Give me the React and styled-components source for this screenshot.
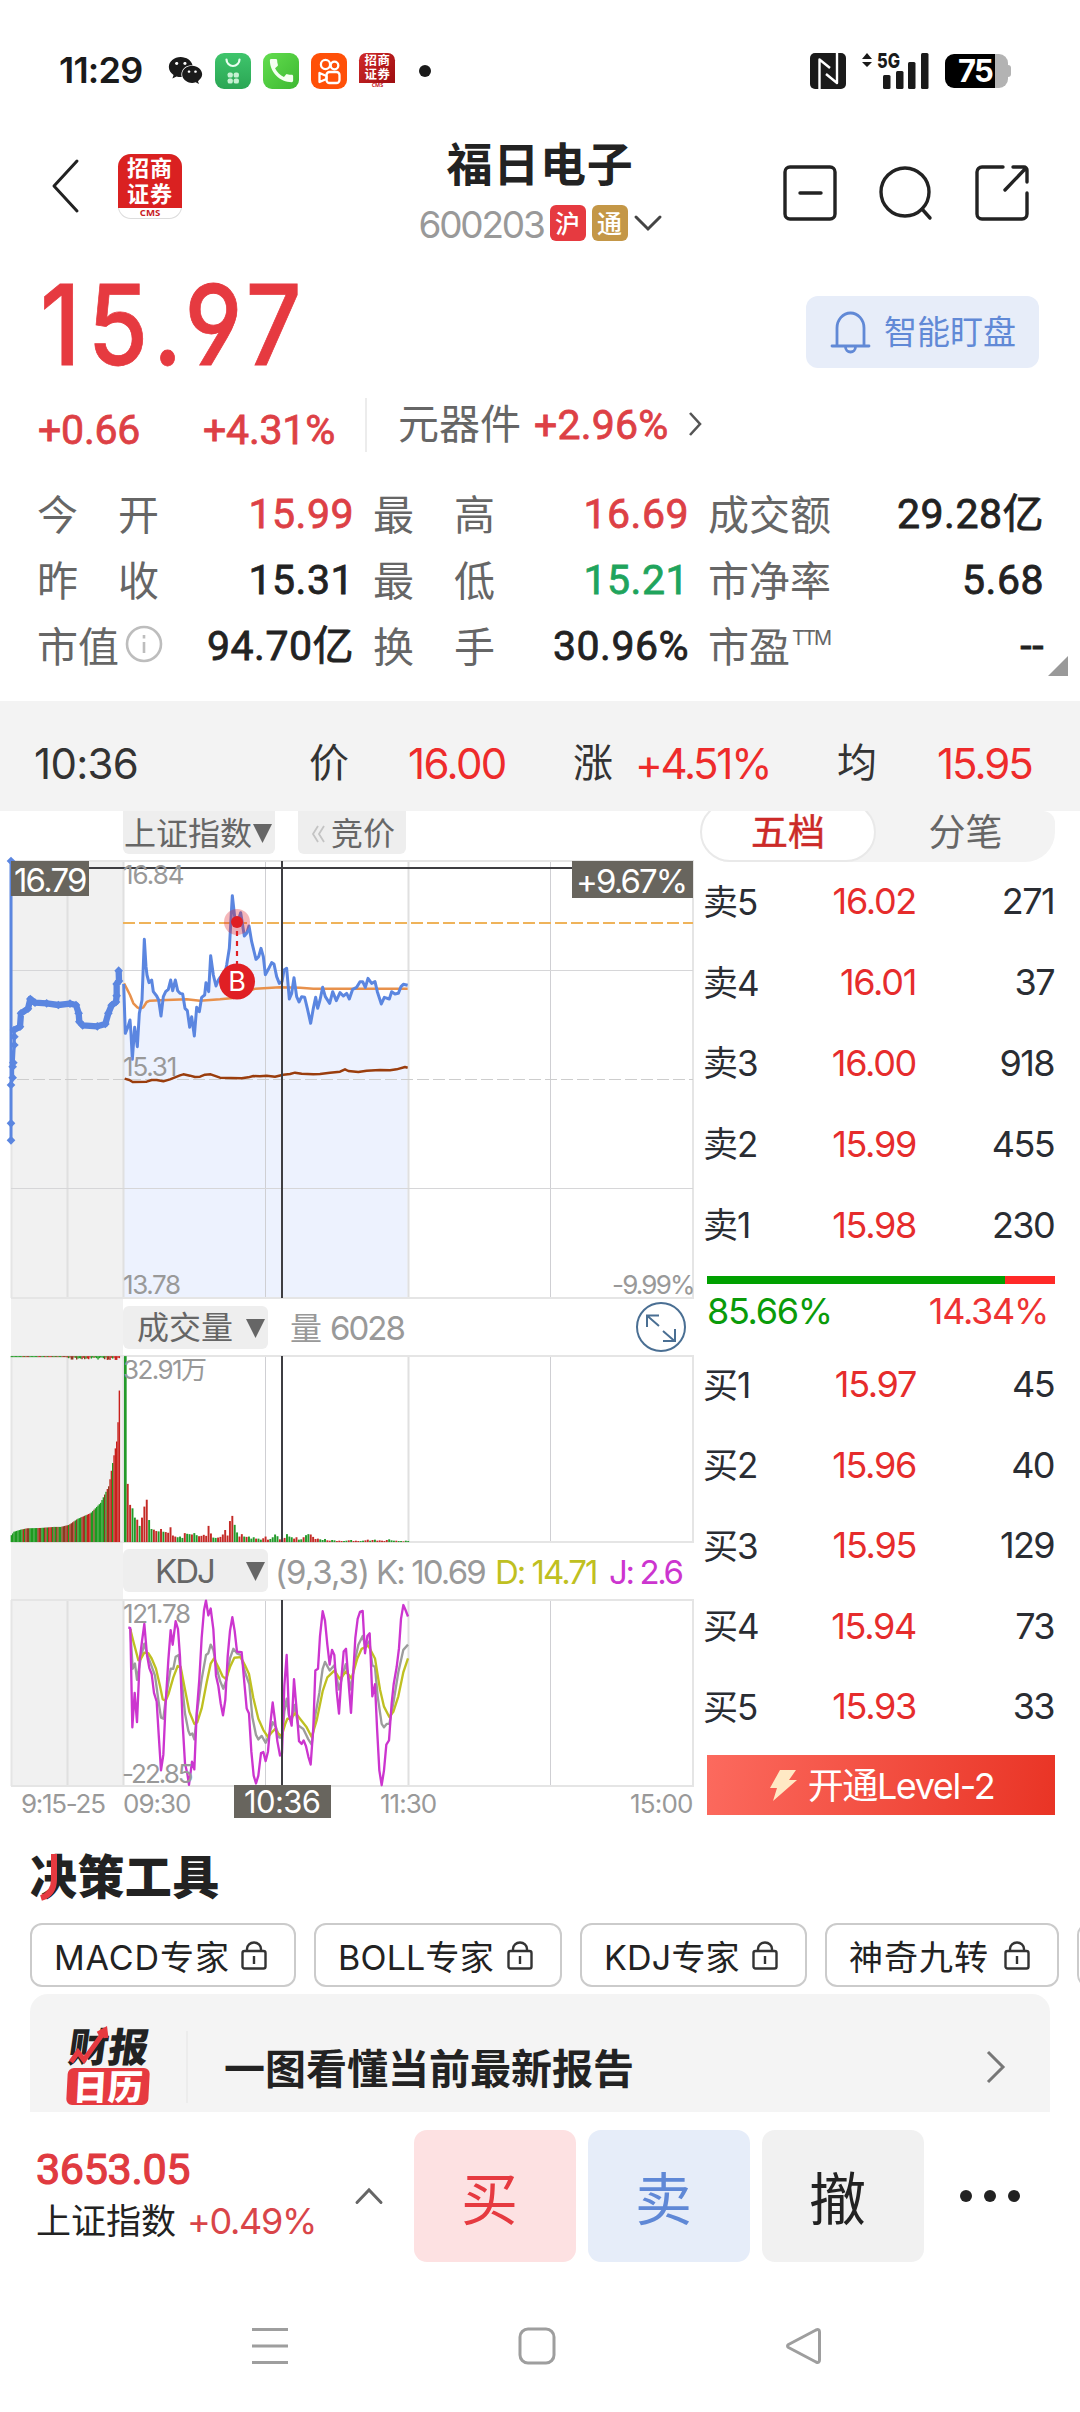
import React from "react";
import styled, { createGlobalStyle } from "styled-components";
import { FaWeixin } from "react-icons/fa";
import { MdCall } from "react-icons/md";

const CJK = `"Noto Sans CJK SC", sans-serif`;
const RED = "#e63a40";
const INK = "#222222";
const MUTED = "#999999";

const GlobalStyle = createGlobalStyle`
  * { box-sizing: border-box; }
  body { margin: 0; background: #fff; font-family: Inter, ${CJK}; color: ${INK}; }
  svg { display: block; overflow: visible; }
  svg text { font-family: Inter, ${CJK}; }
`;

const Page = styled.div`
  width: 1080px;
  height: 2412px;
  overflow: hidden;
  background: #fff;
  display: flex;
  flex-direction: column;
`;

const Text = styled.span`
  display: block;
  white-space: nowrap;
  font-family: ${(p) => (p.$din ? "Roboto" : "Inter")}, ${CJK};
  font-size: ${(p) => p.$size}px;
  line-height: ${(p) => p.$lh || Math.round(p.$size * 1.25)}px;
  font-weight: ${(p) => p.$weight || 400};
  -webkit-text-stroke: ${(p) => p.$bolder || 0}px currentColor;
  color: ${(p) => p.$color || INK};
  letter-spacing: ${(p) => p.$ls || 0}px;
`;

/* ---------- status bar ---------- */

const StatusBar = styled.div`
  height: 142px;
  padding: 0 69px 1px 59px;
  display: flex;
  align-items: center;
  justify-content: space-between;
`;

const StatusGroup = styled.div`
  display: flex;
  align-items: center;
`;

const AppIcon = styled.div`
  width: 36px;
  height: 36px;
  margin-right: 12px;
  border-radius: 9px;
  background: ${(p) => p.$bg};
  display: flex;
  align-items: center;
  justify-content: center;
`;

const WechatIcon = styled(FaWeixin)`
  width: 35px;
  height: 31px;
  margin: 0 12px 0 26px;
  color: #1a1a1a;
`;

const CallIcon = styled(MdCall)`
  width: 31px;
  height: 31px;
  color: #f4fff0;
`;

const StatusDot = styled.div`
  width: 12px;
  height: 12px;
  margin-left: 24px;
  border-radius: 50%;
  background: #1a1a1a;
`;

const Battery = styled.div`
  width: 63px;
  height: 34px;
  margin-left: 16px;
  border-radius: 9px;
  background: linear-gradient(90deg, #000 0 50px, #b3b3b3 50px);
  display: flex;
  align-items: center;
  padding-left: 13px;
`;

const BatteryTip = styled.div`
  width: 3px;
  height: 12px;
  border-radius: 0 3px 3px 0;
  background: #b3b3b3;
`;

const BrandBox = styled.div`
  width: ${(p) => p.$s}px;
  height: ${(p) => p.$s + (p.$s > 40 ? 1 : 0)}px;
  border-radius: ${(p) => p.$s * 0.2}px;
  background: #fff;
  box-shadow: ${(p) => (p.$s > 40 ? "inset 0 0 0 1px #dcdcdc" : "none")};
  display: flex;
  flex-direction: column;
`;

const BrandTop = styled.div`
  height: 84%;
  padding-top: ${(p) => p.$s * 0.015}px;
  border-radius: ${(p) => `${p.$s * 0.2}px ${p.$s * 0.2}px 0 0`};
  background: ${(p) => p.$bg};
  display: flex;
  flex-direction: column;
  align-items: center;
`;

const BrandLine = styled.span`
  font: 700 ${(p) => p.$s * 0.345}px / ${(p) => p.$s * 0.4}px ${CJK};
  letter-spacing: ${(p) => p.$s * 0.015}px;
  color: #fff;
`;

const BrandName = styled.div`
  text-align: center;
  font: 700 ${(p) => p.$s * 0.15}px / ${(p) => p.$s * 0.16}px "Open Sans", sans-serif;
  color: #c8201f;
`;

function Brand({ s, bg }) {
  return (
    <BrandBox $s={s}>
      <BrandTop $s={s} $bg={bg}>
        <BrandLine $s={s}>招商</BrandLine>
        <BrandLine $s={s}>证券</BrandLine>
      </BrandTop>
      <BrandName $s={s}>CMS</BrandName>
    </BrandBox>
  );
}

function Status() {
  return (
    <StatusBar>
      <StatusGroup>
        <Text $size={36} $weight={600} $ls={-0.8} $color="#1a1a1a">11:29</Text>
        <WechatIcon />
        <AppIcon $bg="linear-gradient(#3fc56c,#2aa654)">
          <svg width="36" height="36" viewBox="0 0 36 36">
            <path d="M11.5 6.500a6.500 6.500 0 0 0 13 0" fill="none" stroke="#eafff1" strokeWidth="2.200" strokeLinecap="round" />
            {[[15.2, 22], [21.3, 22], [15.2, 28], [21.3, 28]].map(([x, y]) => (
              <rect key={x + "-" + y} x={x - 2.6} y={y - 2.6} width="5.200" height="5.200" rx="1.900" fill="#c6f1d3" />
            ))}
          </svg>
        </AppIcon>
        <AppIcon $bg="linear-gradient(135deg,#63dd4e,#3db832)">
          <CallIcon />
        </AppIcon>
        <AppIcon $bg="#ff5008">
          <svg width="36" height="36" viewBox="0 0 36 36" fill="none" stroke="#fff" strokeWidth="2.300">
            <circle cx="14.500" cy="11.500" r="4.600" />
            <circle cx="23.500" cy="12.500" r="3.800" />
            <rect x="15.500" y="19" width="13" height="11" rx="3" />
            <path d="M15.500 23l-7-3v9l7-3z" strokeLinejoin="round" />
          </svg>
        </AppIcon>
        <Brand s={36} bg="linear-gradient(135deg,#d12a2a,#9d0d10)" />
        <StatusDot />
      </StatusGroup>
      <StatusGroup>
        <svg width="36" height="36" viewBox="0 0 36 36">
          <rect width="36" height="36" rx="5" fill="#1a1a1a" />
          <path d="M9.500 36V6.500L20 15M27 0V30L16 21" fill="none" stroke="#fff" strokeWidth="2.400" strokeLinejoin="round" />
        </svg>
        <svg width="83" height="38" viewBox="0 0 83 38">
          <path d="M16 7l5-6 5 6zM16 10l5 5 5-5z" fill="#1a1a1a" />
          <text x="31" y="15.500" fontSize="20.500" fontWeight="800" textLength="23" lengthAdjust="spacingAndGlyphs" fill="#1a1a1a">5G</text>
          <rect x="37" y="23" width="7.500" height="14" rx="1.500" fill="#1a1a1a" />
          <rect x="50" y="19" width="7.500" height="18" rx="1.500" fill="#1a1a1a" />
          <rect x="62" y="10" width="7.500" height="27" rx="1.500" fill="#1a1a1a" />
          <rect x="75" y="1" width="7.500" height="36" rx="1.500" fill="#1a1a1a" />
        </svg>
        <Battery>
          <Text $size={31} $weight={700} $ls={-1.7} $lh={34} $color="#fff">75</Text>
        </Battery>
        <BatteryTip />
      </StatusGroup>
    </StatusBar>
  );
}

/* ---------- header ---------- */

const Header = styled.header`
  height: 110px;
  padding: 0 51px;
  display: grid;
  grid-template-columns: 1fr auto 1fr;
`;

const HeaderLeft = styled.div`
  height: 88px;
  display: flex;
  align-items: center;
  gap: 39px;
`;

const HeaderRight = styled.div`
  height: 102px;
  display: flex;
  align-items: center;
  justify-content: flex-end;
  gap: 42px;
`;

const HeaderTitle = styled.div`
  display: flex;
  flex-direction: column;
  align-items: center;
`;

const CodeRow = styled.div`
  height: 36px;
  margin-top: 18px;
  display: flex;
  align-items: center;
`;

const Code = styled(Text)`
  margin-top: 3px;
`;

const Tag = styled.span`
  width: 36px;
  height: 36px;
  margin-left: 6px;
  border-radius: 6px;
  background: ${(p) => p.$bg};
  font: 500 25px / 35px ${CJK};
  color: #fff;
  text-align: center;
`;

function TopHeader() {
  return (
    <Header>
      <HeaderLeft>
        <svg width="28" height="56" viewBox="0 0 28 56" fill="none" stroke={INK} strokeWidth="3" strokeLinecap="round" strokeLinejoin="round">
          <path d="M26 3L3 28l23 25" />
        </svg>
        <Brand s={64} bg="#da2121" />
      </HeaderLeft>
      <HeaderTitle>
        <Text $size={46} $weight={700} $lh={45} $ls={0.7}>福日电子</Text>
        <CodeRow>
          <Code $size={37} $color={MUTED} $ls={-2.2}>600203</Code>
          <Tag $bg={RED}>沪</Tag>
          <Tag $bg="#c49747">通</Tag>
          <svg width="34" height="20" viewBox="0 0 34 20" fill="none" stroke="#444" strokeWidth="3" strokeLinecap="round">
            <path d="M8 4l12 12L32 4" />
          </svg>
        </CodeRow>
      </HeaderTitle>
      <HeaderRight>
        <svg width="54" height="56" viewBox="0 0 54 56" fill="none" stroke={INK} strokeWidth="3.400" strokeLinecap="round">
          <rect x="2" y="2" width="50" height="52" rx="5" />
          <path d="M17 28h21" />
        </svg>
        <svg width="54" height="56" viewBox="0 0 54 56" fill="none" stroke={INK} strokeWidth="3.400" strokeLinecap="round">
          <circle cx="26" cy="27" r="24" />
          <path d="M43 44l8 9" />
        </svg>
        <svg width="54" height="56" viewBox="0 0 54 56" fill="none" stroke={INK} strokeWidth="3.400" strokeLinecap="round" strokeLinejoin="round">
          <path d="M28 2H7a5 5 0 0 0-5 5v42a5 5 0 0 0 5 5h40a5 5 0 0 0 5-5V28M38 2h11a3 3 0 0 1 3 3v12M50 4L30 25" />
        </svg>
      </HeaderRight>
    </Header>
  );
}

/* ---------- quote ---------- */

const PriceRow = styled.div`
  height: 142px;
  padding: 0 41px 0 40px;
  display: flex;
  justify-content: space-between;
`;

const BigPrice = styled.div`
  transform: scaleX(0.88);
  transform-origin: 0 50%;
  font: 500 111px / 145px Inter, sans-serif;
  font-feature-settings: "cv03", "cv04";
  -webkit-text-stroke: 0.8px currentColor;
  letter-spacing: 8.1px;
  color: ${RED};
`;

const WatchButton = styled.button`
  width: 233px;
  height: 72px;
  margin-top: 44px;
  padding: 0 0 0 24px;
  border: 0;
  border-radius: 12px;
  background: #e7edf9;
  display: flex;
  align-items: center;
  gap: 13px;
`;

const ChangeRow = styled.div`
  height: 54px;
  padding-left: 38px;
  display: grid;
  grid-template-columns: 165px 162px 33px 136px 154px 20px;
  align-items: center;
`;

const ChangeValue = styled(Text)`
  margin-top: ${(p) => p.$drop}px;
`;

const Rule = styled.div`
  width: 2px;
  height: ${(p) => p.$h || 54}px;
  background: #ececec;
`;

const Stats = styled.div`
  position: relative;
  height: 253px;
  padding: 33px 35px 0 37px;
  display: grid;
  grid-template-columns: 317px 316px 336px;
  grid-auto-rows: 66px;
  column-gap: 19px;
`;

const Stat = styled.div`
  display: flex;
  align-items: center;
  justify-content: space-between;
`;

const StatLabel = styled.div`
  width: ${(p) => p.$w}px;
  margin-top: -4px;
  display: flex;
  align-items: center;
  justify-content: space-between;
  white-space: nowrap;
  font: 400 41px / 48px ${CJK};
  color: #666;
`;

const Sup = styled.span`
  align-self: flex-start;
  margin-top: 8px;
  font: 400 20px / 20px Inter, sans-serif;
  letter-spacing: -2px;
`;

const Corner = styled.div`
  position: absolute;
  right: 12px;
  bottom: 25px;
  width: 20px;
  height: 20px;
  background: #999;
  clip-path: polygon(100% 0, 100% 100%, 0 100%);
`;

const STATS = [
  ["今 开", "15.99", "#dd4045"], ["最 高", "16.69", "#dd4045"], ["成交额", "29.28亿"],
  ["昨 收", "15.31"], ["最 低", "15.21", "#1fa45c"], ["市净率", "5.68"],
  ["市值 i", "94.70亿"], ["换 手", "30.96%"], ["市盈 TTM", "--"],
];

function LabelPart({ part }) {
  if (part === "i")
    return (
      <svg width="38" height="38" viewBox="0 0 38 38" fill="none" stroke="#bdbdbd" strokeWidth="2.600">
        <circle cx="19" cy="19" r="17" />
        <path d="M19 17v11M19 10v3.500" />
      </svg>
    );
  if (part === "TTM") return <Sup>TTM</Sup>;
  return <span>{part}</span>;
}

function Quote() {
  const change = { $din: true, $size: 41, $bolder: 0.8, $color: "#dd4045" };
  return (
    <section>
      <PriceRow>
        <BigPrice>15.97</BigPrice>
        <WatchButton>
          <svg width="41" height="42" viewBox="0 0 41 42" fill="none" stroke="#6189d6" strokeWidth="2.800" strokeLinecap="round">
            <path d="M2 35h37M7 35V17a13.500 15 0 0 1 27 0v18M15.500 36a5 5 0 0 0 10 0" />
          </svg>
          <Text $size={33} $color="#6189d6">智能盯盘</Text>
        </WatchButton>
      </PriceRow>
      <ChangeRow>
        <ChangeValue {...change} $drop={11} $ls={-0.2}>+0.66</ChangeValue>
        <ChangeValue {...change} $drop={11} $ls={-0.2}>+4.31%</ChangeValue>
        <Rule />
        <ChangeValue $drop={-1} $size={41} $color="#666">元器件</ChangeValue>
        <ChangeValue {...change} $drop={1} $ls={0.2}>+2.96%</ChangeValue>
        <svg width="14" height="26" viewBox="0 0 14 26" fill="none" stroke="#555" strokeWidth="2.600">
          <path d="M2 1l10 11L2 23" />
        </svg>
      </ChangeRow>
      <Stats>
        {STATS.map(([label, value, color]) => (
          <Stat key={label}>
            <StatLabel $w={label.endsWith("i") ? 126 : 122}>
              {label.split(" ").map((part) => (
                <LabelPart key={part} part={part} />
              ))}
            </StatLabel>
            <Text $din $size={41} $bolder={0.8} $ls={0.5} $color={color}>{value}</Text>
          </Stat>
        ))}
        <Corner />
      </Stats>
    </section>
  );
}

const CursorBar = styled.div`
  height: 110px;
  padding: 14px 0 0 34px;
  background: #f3f3f3;
  display: grid;
  grid-template-columns: 275px 99px 165px 62px 202px 100px 1fr;
  align-items: center;
`;

function CursorInfo() {
  const up = "#ee2b2b";
  return (
    <CursorBar>
      <Text $size={42} $ls={-0.7} $color="#333">10:36</Text>
      <Text $size={40} $color="#333">价</Text>
      <Text $size={42} $ls={-1.6} $color={up}>16.00</Text>
      <Text $size={40} $color="#333">涨</Text>
      <Text $size={42} $ls={-2.3} $color={up}>+4.51%</Text>
      <Text $size={40} $color="#333">均</Text>
      <Text $size={42} $ls={-2} $color={up}>15.95</Text>
    </CursorBar>
  );
}

/* ---------- charts ---------- */

const Main = styled.div`
  height: 1009px;
  display: grid;
  grid-template-columns: 700px 1fr;
`;

const ChipRow = styled.div`
  height: 46px;
  padding-left: 123px;
  display: flex;
  align-items: flex-start;
  gap: 23px;
`;

const Chip = styled.div`
  width: ${(p) => p.$w}px;
  height: 43px;
  padding: 2px ${(p) => p.$pr || 3}px 0 ${(p) => p.$pl}px;
  border-radius: ${(p) => (p.$top ? "0 0 6px 6px" : "6px")};
  background: #eee;
  display: flex;
  align-items: center;
  justify-content: space-between;
`;

const PanelHead = styled.div`
  height: ${(p) => p.$h}px;
  padding-right: 14px;
  display: flex;
  align-items: center;
`;

const AuctionGap = styled.div`
  width: 112px;
  height: 100%;
  margin-left: 11px;
  background: #f1f1f1;
`;

const PanelInfo = styled.div`
  flex: 1;
  padding: 3px 0 0 ${(p) => p.$pl}px;
  display: grid;
  grid-template-columns: ${(p) => p.$cols};
  align-items: center;
`;

const Caret = () => (
  <svg width="19" height="19" viewBox="0 0 19 19">
    <path d="M0 0h19L9.500 19z" fill="#666" />
  </svg>
);

const PRICE = "371,552 376,700 384,680 390,660 393,700 397,778 404,682 412,740 418,640 426,600 433,418 438,500 441,525 447,548 455,540 460,575 470,588 476,600 483,648 490,590 497,575 505,568 512,540 518,572 526,540 533,572 540,580 548,582 555,625 562,632 569,682 575,650 583,708 590,622 598,635 605,592 614,585 618,548 626,575 632,467 640,525 648,558 655,540 662,530 675,520 680,495 688,445 697,287 704,350 712,370 722,338 733,408 740,400 747,378 755,425 768,478 776,470 783,445 790,470 796,524 805,508 815,488 822,492 830,530 838,550 846,545 852,510 860,505 868,597 875,580 882,533 890,590 897,606 905,590 914,592 922,625 932,670 940,625 947,592 953,625 960,600 968,562 976,590 989,610 998,575 1009,602 1020,578 1030,588 1040,580 1048,597 1058,568 1070,562 1080,545 1088,545 1096,562 1104,535 1115,550 1125,545 1132,575 1144,612 1153,592 1168,597 1175,575 1185,582 1195,580 1203,560 1210,553 1223,556";
const AVERAGE = "372,550 380,565 390,585 400,610 412,622 420,626 430,622 440,606 450,602 500,600 560,598 600,602 660,598 700,594 740,575 766,566 840,562 900,563 940,566 1223,566";
const INDEX = "374,836 388,840 398,846 440,845 455,840 470,840 490,844 510,838 525,832 540,826 550,823 570,827 585,831 600,830 615,824 632,823 660,833 725,835 745,832 760,828 780,829 800,827 825,830 850,824 870,822 885,818 905,821 940,823 960,822 990,818 1020,815 1035,808 1045,813 1075,816 1100,812 1140,810 1170,811 1190,808 1215,801 1223,803";
const AUCTION = [[33, 183], [33, 1021], [33, 970], [33, 855], [38, 833], [38, 800], [40, 788], [43, 735], [43, 710], [42, 690], [60, 680], [63, 640], [84, 626], [91, 597], [105, 608], [140, 610], [175, 615], [210, 611], [228, 615], [236, 640], [238, 665], [248, 676], [292, 679], [316, 672], [325, 640], [335, 616], [348, 606], [350, 587], [350, 552], [357, 543], [356, 512]];
const KDJ_J = "385,980 391,982 397,1270 404,1170 411,1255 419,1075 426,1020 433,970 441,1060 448,1098 455,1115 462,1170 470,1195 476,1290 483,1395 490,1350 497,1200 505,1075 512,988 518,1030 527,962 534,985 540,1065 548,1260 555,1375 562,1405 567,1437 576,1370 583,1392 590,1230 598,1130 605,1010 612,930 618,902 625,945 632,925 640,985 648,1120 655,1150 662,1200 669,1235 676,1190 683,1065 690,990 697,950 704,990 711,1050 725,1052 733,1140 740,1215 747,1230 754,1340 761,1410 768,1433 775,1410 783,1345 790,1342 797,1368 804,1340 811,1260 818,1198 825,1250 832,1310 840,1352 846,1345 853,1150 860,1060 867,1235 875,1265 882,1130 890,1220 897,1310 905,1318 911,1308 918,1325 925,1355 932,1378 940,1270 946,1105 954,1100 960,1005 968,933 975,960 982,1030 989,1088 996,1045 1003,1060 1010,1165 1017,1230 1024,1130 1031,1050 1038,1042 1045,1130 1053,1228 1060,1110 1066,1010 1073,955 1080,935 1088,932 1095,1055 1102,1005 1109,997 1117,1180 1125,1145 1131,1270 1138,1395 1145,1438 1152,1395 1159,1320 1167,1308 1175,1200 1181,1145 1190,1095 1197,1040 1203,955 1210,915 1216,928 1224,948";
const KDJ_D = "391,985 400,1020 415,1075 422,1072 433,1053 445,1055 455,1070 468,1100 480,1150 488,1188 497,1193 505,1175 520,1125 533,1092 542,1095 555,1160 568,1225 583,1260 592,1255 605,1215 620,1140 632,1085 642,1070 655,1095 668,1122 678,1130 690,1095 703,1068 722,1066 735,1090 747,1115 760,1185 775,1245 790,1278 804,1298 815,1285 825,1275 835,1288 845,1296 855,1262 862,1245 872,1245 887,1228 900,1245 920,1270 935,1298 950,1250 968,1165 982,1125 1003,1105 1020,1130 1038,1108 1055,1128 1072,1070 1085,1042 1105,1033 1125,1070 1140,1160 1152,1210 1168,1240 1180,1225 1195,1180 1210,1110 1224,1070";
const KDJ_K = "391,985 398,1100 405,1085 411,1132 422,1070 433,1027 442,1060 452,1085 465,1120 475,1190 483,1242 490,1245 497,1190 505,1140 512,1100 520,1100 527,1065 536,1060 545,1130 555,1230 565,1280 570,1292 577,1288 583,1305 592,1220 605,1130 618,1060 625,1055 632,1030 640,1045 648,1090 660,1135 670,1158 680,1130 690,1070 700,1042 711,1055 722,1060 735,1110 748,1145 757,1240 768,1292 775,1305 785,1295 797,1315 808,1290 818,1255 828,1270 838,1300 846,1300 853,1225 860,1187 867,1235 875,1250 883,1205 895,1265 910,1275 925,1305 935,1320 945,1240 958,1170 968,1100 975,1080 989,1105 1003,1090 1017,1160 1030,1110 1037,1087 1045,1120 1053,1160 1063,1085 1075,1030 1088,1005 1096,1035 1108,1020 1117,1090 1125,1095 1133,1180 1145,1260 1152,1270 1160,1260 1168,1260 1180,1200 1195,1110 1210,1045 1224,1030";

const VOLUMES = [540, 169, 108, 98, 71, 65, 47, 71, 103, 123, 64, 38, 36, 32, 31, 38, 30, 29, 27, 43, 19, 16, 14, 16, 12, 26, 24, 23, 22, 26, 20, 17, 18, 21, 18, 47, 25, 13, 12, 13, 15, 22, 35, 19, 61, 76, 50, 28, 16, 23, 16, 15, 16, 10, 14, 10, 10, 7, 11, 16, 7, 9, 14, 22, 17, 8, 8, 12, 23, 16, 14, 10, 14, 7, 8, 14, 20, 23, 22, 15, 9, 10, 8, 6, 9, 5, 4, 6, 5, 3, 4, 3, 3, 4, 5, 6, 3, 4, 3, 3, 4, 5, 7, 4, 6, 7, 4, 5, 4, 3, 6, 8, 5, 4, 4, 3, 3, 2, 4, 3];
const UP = "rrrggrgrrrggrrgrgrrrrrgggrggrggrrrrrrggrrrrrrrggrrgrgggrggrrrggggrrrgggrrggrggrrrrgggrrgg";

const AUCTION_PROFILE = [[32, 712], [40, 702], [60, 696], [80, 692], [120, 691], [160, 688], [180, 688], [205, 682], [230, 665], [270, 648], [300, 618], [325, 568], [332, 525], [340, 480], [350, 430], [356, 292], [360, 292]];
const profileAt = (x) => {
  const i = AUCTION_PROFILE.findIndex(([px]) => px > x);
  const [x0, y0] = AUCTION_PROFILE[i - 1];
  const [x1, y1] = AUCTION_PROFILE[i];
  return y0 + ((y1 - y0) * (x - x0)) / (x1 - x0);
};
const AUCTION_BARS = Array.from({ length: 82 }, (_, i) => {
  const x = 32 + i * 4;
  const mix = (i * 7 + ((i * i) % 11)) % 10;
  const greenZone = (x > 84 && x < 106) || (x > 160 && x < 188) || (x > 272 && x < 300) || x < 66;
  const redZone = x > 338 || (x > 258 && x < 272);
  const color = redZone ? "#c8201c" : greenZone ? (mix > 8 ? "#8a4a22" : "#1d9a20") : mix < 4 ? "#1d9a20" : mix < 7 ? "#8a3c22" : "#b92a1e";
  return { x, y: profileAt(x), color, tip: x < 200 ? 3 : 4 + (mix % 8) };
});

const GREEN = "#239a2a";
const CRIMSON = "#c42a26";

function Verticals({ top, bottom }) {
  return (
    <g fill="none" strokeWidth="2">
      <path d={`M67.500 ${top}V${bottom}M123.500 ${top}V${bottom}M408.500 ${top}V${bottom}`} stroke="#e0e0e0" />
      <path d={`M265.500 ${top}V${bottom}M550.500 ${top}V${bottom}`} stroke="#cfcfd3" strokeWidth="1" />
      <path d={`M11.500 ${top}V${bottom}M693 ${top}V${bottom}M11 ${top}H694M11 ${bottom}H694`} stroke="#e5e5e5" />
    </g>
  );
}

function PriceChart() {
  return (
    <svg width="700" height="445" viewBox="0 0 700 445">
      <rect x="11" y="4" width="112" height="441" fill="#f1f1f1" />
      <g transform="translate(0 -57) scale(0.333333)">
        <polygon points={`371,1494 ${PRICE} 1223,1494`} fill="#edf2fe" />
      </g>
      <Verticals top={4} bottom={441} />
      <path d="M11 113.500H693M11 331.500H693" stroke="#d6d6d8" strokeWidth="1" />
      <path d="M17 222.500H693" stroke="#cdcdcd" strokeWidth="1" strokeDasharray="12 4" />
      <path d="M123 66H693" stroke="#efb35a" strokeWidth="2" strokeDasharray="12 4" />
      <g transform="translate(0 -57) scale(0.333333)" fill="none" strokeWidth="9" strokeLinejoin="round">
        <polyline points={AVERAGE} stroke="#e8914c" strokeWidth="7.500" />
        <polyline points={PRICE} stroke="#5b86e0" />
        <polyline points={INDEX} stroke="#9a3d0d" strokeWidth="7.500" />
        <polyline points={AUCTION.map((p) => p.join(",")).join(" ")} stroke="#5b86e0" />
        <polyline points={AUCTION.slice(9).map((p) => p.join(",")).join(" ")} stroke="#5b86e0" strokeWidth="19" />
        {AUCTION.map(([x, y], i) => (
          <path key={i} d={`M${x - 13} ${y}l13-13 13 13-13 13z`} fill="#5b86e0" />
        ))}
      </g>
      <path d="M11 11H693M282 4V441" stroke="#3e3e42" strokeWidth="2" />
      <circle cx="237" cy="65" r="13" fill="rgba(224,32,36,.32)" />
      <circle cx="237" cy="65" r="6" fill="#e01f24" />
      <path d="M237 74V107" stroke="#e01f24" strokeWidth="2.200" strokeDasharray="5 5" />
      <circle cx="237" cy="124.500" r="18" fill="#e01f24" />
      <text x="237" y="134" fontSize="27" textAnchor="middle" fill="#fff">B</text>
      <rect x="11" y="4" width="78" height="35" fill="#68655e" />
      <text x="14" y="35" fontSize="33" letterSpacing="-1.800" fill="#fff">16.79</text>
      <rect x="572" y="4" width="121" height="37" fill="#68655e" />
      <text x="576" y="36" fontSize="33" letterSpacing="-1.900" fill="#fff">+9.67%</text>
      <g fontSize="26" fill="#999">
        <text x="123" y="27" letterSpacing="-1">16.84</text>
        <text x="123" y="219" letterSpacing="-1.200">15.31</text>
        <text x="123" y="437" letterSpacing="-1.400">13.78</text>
        <text x="612" y="437" letterSpacing="-1.800">-9.99%</text>
      </g>
    </svg>
  );
}

function VolumeChart() {
  return (
    <svg width="700" height="192" viewBox="0 0 700 192">
      <rect x="11" y="0" width="112" height="192" fill="#f1f1f1" />
      <Verticals top={4} bottom={190} />
      <g transform="translate(0 -62) scale(0.333333 0.344353)">
        {AUCTION_BARS.map((b) => (
          <g key={b.x} fill={b.color}>
            <rect x={b.x} y={b.y} width="4.200" height={732 - b.y} />
            <rect x={b.x} y="192" width="4.200" height={b.tip} />
          </g>
        ))}
        {VOLUMES.map((v, i) => (
          <rect key={i} x={i === 0 ? 372 : 373.2 + i * 7.13} y={732 - v} width={i === 0 ? 8 : 5.8} height={v}
            fill={i === 0 || UP[i % UP.length] === "g" ? GREEN : CRIMSON} />
        ))}
      </g>
      <path d="M282 4V190" stroke="#3e3e42" strokeWidth="2" />
      <text x="123" y="27" fontSize="26" letterSpacing="-1.600" fill="#999">32.91万</text>
    </svg>
  );
}

function KdjChart() {
  return (
    <svg width="700" height="223" viewBox="0 0 700 223">
      <rect x="11" y="0" width="112" height="189" fill="#f1f1f1" />
      <Verticals top={3} bottom={189} />
      <g transform="translate(0 -307) scale(0.333333 0.344353)" fill="none" strokeWidth="7" strokeLinejoin="round">
        <polyline points={KDJ_K} stroke="#9c9c9c" />
        <polyline points={KDJ_D} stroke="#bfc021" />
        <polyline points={KDJ_J} stroke="#cc35cf" />
      </g>
      <path d="M282 3V189" stroke="#3e3e42" strokeWidth="2" />
      <g fontSize="26" fill="#999">
        <text x="123" y="26" letterSpacing="-1.300">121.78</text>
        <text x="122" y="186" letterSpacing="-2">-22.85</text>
        <text x="21" y="216" letterSpacing="-1.300">9:15-25</text>
        <text x="123" y="216" letterSpacing="-1">09:30</text>
        <text x="380" y="216" letterSpacing="-1">11:30</text>
        <text x="630" y="216" letterSpacing="-0.800">15:00</text>
      </g>
      <rect x="234" y="188" width="97" height="33" fill="#68655e" />
      <text x="244" y="216" fontSize="31" letterSpacing="-0.600" fill="#fff">10:36</text>
    </svg>
  );
}

function Charts() {
  return (
    <div>
      <ChipRow>
        <Chip $top $w={152} $pl={1}>
          <Text $size={32} $color="#666">上证指数</Text>
          <Caret />
        </Chip>
        <Chip $top $w={108} $pl={13} $pr={11}>
          <svg width="15" height="18" viewBox="0 0 15 18" fill="none" stroke="#c4c4c4" strokeWidth="1.800">
            <path d="M7 1L2 9l5 8M13 1L8 9l5 8" />
          </svg>
          <Text $size={32} $color="#666">竞价</Text>
        </Chip>
      </ChipRow>
      <PriceChart />
      <PanelHead $h={50}>
        <AuctionGap />
        <Chip $w={145} $pl={14}>
          <Text $size={32} $color="#666">成交量</Text>
          <Caret />
        </Chip>
        <PanelInfo $pl={22} $cols="40px 1fr">
          <Text $size={32} $color={MUTED}>量</Text>
          <Text $size={33} $color={MUTED} $ls={-2}>6028</Text>
        </PanelInfo>
        <svg width="50" height="50" viewBox="0 0 50 50" fill="none" stroke="#4a6f93" strokeWidth="2">
          <circle cx="25" cy="25" r="24" />
          <path d="M11 25V13.500h12M11.500 14L23 24M27 29l11.500 10M39 27v12H27" />
        </svg>
      </PanelHead>
      <VolumeChart />
      <PanelHead $h={53}>
        <AuctionGap />
        <Chip $w={145} $pl={32}>
          <Text $size={33} $color="#666" $ls={-2}>KDJ</Text>
          <Caret />
        </Chip>
        <PanelInfo $pl={7} $cols="101px 119px 114px 1fr">
          <Text $size={33} $color={MUTED} $ls={-1}>(9,3,3)</Text>
          <Text $size={33} $color={MUTED} $ls={-1.9}>K: 10.69</Text>
          <Text $size={33} $color="#bfc021" $ls={-2}>D: 14.71</Text>
          <Text $size={33} $color="#cc35cf" $ls={-2.4}>J: 2.6</Text>
        </PanelInfo>
      </PanelHead>
      <KdjChart />
    </div>
  );
}

/* ---------- order book ---------- */

const Book = styled.div`
  width: 355px;
`;

const Tabs = styled.div`
  height: 51px;
  border-radius: 0 12px 30px 30px / 0 12px 30px 30px;
  background: #f3f3f3;
  display: grid;
  grid-template-columns: 176px 1fr;
  clip-path: inset(0);
`;

const Tab = styled.div`
  height: 60px;
  margin-top: -9px;
  border-radius: 30px;
  border: 2px solid ${(p) => (p.$on ? "#e9e9e9" : "transparent")};
  background: ${(p) => (p.$on ? "#fff" : "transparent")};
  box-shadow: ${(p) => (p.$on ? "-30px 0 0 -2px #fff" : "none")};
  text-align: center;
  font: 400 37px / 53px ${CJK};
  -webkit-text-stroke: ${(p) => (p.$on ? 0.5 : 0)}px currentColor;
  color: ${(p) => (p.$on ? "#cc2a28" : "#666")};
`;

const Level = styled.div`
  height: ${(p) => p.$h}px;
  padding: 0 1px 1px 3px;
  display: grid;
  grid-template-columns: 100px 113px 1fr;
  align-items: center;
`;

const Right = styled(Text)`
  text-align: right;
`;

const Ratio = styled.div`
  height: 8px;
  margin: 10px 0 8px 7px;
  background: linear-gradient(90deg, #00a000 85.66%, #ff2a28 85.66%);
`;

const RatioText = styled.div`
  height: 40px;
  padding: 0 7px;
  margin-bottom: 13px;
  display: flex;
  align-items: center;
  justify-content: space-between;
`;

const Level2 = styled.button`
  width: 348px;
  height: 60px;
  margin: 8px 0 0 7px;
  padding: 2px 0 0 1px;
  border: 0;
  background: linear-gradient(100deg, #fc6a5e, #e93425);
  display: flex;
  align-items: center;
  justify-content: center;
  gap: 10px;
`;

const SELL = [["卖5", "16.02", "271"], ["卖4", "16.01", "37"], ["卖3", "16.00", "918"], ["卖2", "15.99", "455"], ["卖1", "15.98", "230"]];
const BUY = [["买1", "15.97", "45"], ["买2", "15.96", "40"], ["买3", "15.95", "129"], ["买4", "15.94", "73"], ["买5", "15.93", "33"]];

function Levels({ rows, h }) {
  return rows.map(([name, price, qty]) => (
    <Level key={name} $h={h}>
      <Text $size={35} $color="#2a2d33" $ls={-1}>{name}</Text>
      <Right $size={36} $color="#e62c2c" $ls={-1.3}>{price}</Right>
      <Right $size={36} $color="#2a2d33" $ls={-1.6}>{qty}</Right>
    </Level>
  ));
}

function OrderBook() {
  return (
    <Book>
      <Tabs>
        <Tab $on>五档</Tab>
        <Tab>分笔</Tab>
      </Tabs>
      <Levels rows={SELL} h={80.8} />
      <Ratio />
      <RatioText>
        <Text $size={36} $ls={-1.3} $color="#0a9b0a">85.66%</Text>
        <Text $size={36} $ls={-1.3} $color="#ee3333">14.34%</Text>
      </RatioText>
      <Levels rows={BUY} h={80.5} />
      <Level2>
        <svg width="29" height="32" viewBox="0 0 29 32">
          <path d="M11 0h16l-7 10h8L4 31l4-13H1z" fill="#ffe9c4" />
        </svg>
        <Text $size={36} $ls={-1.4} $color="#fff">开通Level-2</Text>
      </Level2>
    </Book>
  );
}

/* ---------- tools ---------- */

const Tools = styled.section`
  height: 292px;
  padding: 32px 0 0 30px;
  overflow: hidden;
`;

const ToolsTitle = styled.div`
  position: relative;
  width: 200px;
  height: 48px;
  font: 900 47px / 44px ${CJK};
  letter-spacing: 0.4px;
`;

const TitleStroke = styled.svg`
  position: absolute;
  left: 9px;
  top: 1px;
`;

const ChipList = styled.div`
  margin-top: 23px;
  display: flex;
  gap: 18px;
`;

const ToolChip = styled.div`
  flex: none;
  width: ${(p) => p.$w}px;
  height: 64px;
  padding: 4px 27px 0 22px;
  border: 2px solid #cbcbcb;
  border-radius: 12px;
  display: flex;
  align-items: center;
  justify-content: space-between;
`;

const Banner = styled.div`
  width: 1020px;
  height: 118px;
  margin-top: 7px;
  padding: 27px 43px 0 37px;
  border-radius: 18px 18px 0 0;
  background: #f4f4f4;
  display: flex;
  align-items: center;
`;

const BannerText = styled.div`
  flex: 1;
  height: 60px;
  margin-left: 36px;
  font: 700 41px / 58px ${CJK};
`;

const CalendarLogo = styled.div`
  position: relative;
  width: 84px;
  height: 80px;
  margin-right: 35px;
`;

const LogoTop = styled.div`
  height: 38px;
  padding-left: 2px;
  transform: skewX(-8deg);
  font: 900 40px / 36px ${CJK};
`;

const LogoBottom = styled.div`
  width: 82px;
  height: 37px;
  margin-top: 3px;
  border-radius: 6px;
  transform: skewX(-3deg);
  background: ${RED};
  text-align: center;
  font: 900 35px / 34px ${CJK};
  color: #fff;
`;

const LogoArrow = styled.svg`
  position: absolute;
  left: 2px;
  top: -1px;
`;

const Lock = () => (
  <svg width="26" height="32" viewBox="0 0 26 32" fill="none" stroke="#333" strokeWidth="2.400">
    <rect x="1.500" y="10" width="23" height="17.500" rx="2" />
    <path d="M6 10V8a7 6.500 0 0 1 14 0v2M13 15v8" />
  </svg>
);

const TOOLS = [["MACD专家", 266, 0.9], ["BOLL专家", 248, 0.2], ["KDJ专家", 227, 0.2], ["神奇九转", 234, 1]];

function ToolsSection() {
  return (
    <Tools>
      <ToolsTitle>
        决策工具
        <TitleStroke width="20" height="48" viewBox="0 0 20 48" fill="none" stroke={RED} strokeWidth="6">
          <path d="M15 1V26Q15 41 2 45" />
        </TitleStroke>
      </ToolsTitle>
      <ChipList>
        {TOOLS.map(([name, w, ls]) => (
          <ToolChip key={name} $w={w}>
            <Text $size={34} $ls={ls}>{name}</Text>
            <Lock />
          </ToolChip>
        ))}
        <ToolChip $w={100} />
      </ChipList>
      <Banner>
        <CalendarLogo>
          <LogoTop>财报</LogoTop>
          <LogoBottom>日历</LogoBottom>
          <LogoArrow width="44" height="40" viewBox="0 0 44 40" fill="none" stroke={RED} strokeWidth="5">
            <path d="M2 36L9 26l6 8L35 6M29 8l7-4 1 8" />
          </LogoArrow>
        </CalendarLogo>
        <Rule $h={72} />
        <BannerText>一图看懂当前最新报告</BannerText>
        <svg width="20" height="34" viewBox="0 0 20 34" fill="none" stroke="#777" strokeWidth="3">
          <path d="M1 2l15 15L1 32" />
        </svg>
      </Banner>
    </Tools>
  );
}

/* ---------- bottom ---------- */

const ActionBar = styled.div`
  height: 168px;
  padding: 18px 0 0 36px;
  display: flex;
`;

const IndexBox = styled.div`
  width: 319px;
  padding-top: 12px;
`;

const IndexLine = styled.div`
  margin-top: 6px;
  display: flex;
  gap: 11px;
`;

const Expand = styled.svg`
  width: 28px;
  height: 18px;
  margin: 57px 31px 0 0;
`;

const Action = styled.button`
  width: 162px;
  height: 132px;
  margin-right: 12px;
  padding: 0 11px 3px 0;
  border: 0;
  border-radius: 13px;
  background: ${(p) => p.$bg};
  color: ${(p) => p.$fg};
  font: 400 57px / 80px ${CJK};
`;

const More = styled.svg`
  margin: 56px 0 0 23px;
`;

const NavBar = styled.nav`
  height: 132px;
  padding: 0 257px 0 251px;
  display: flex;
  align-items: center;
  justify-content: space-between;
`;

function Bottom() {
  return (
    <>
      <ActionBar>
        <IndexBox>
          <Text $din $size={43} $bolder={1.2} $ls={-0.3} $color="#e03a40">3653.05</Text>
          <IndexLine>
            <Text $size={35} $lh={38}>上证指数</Text>
            <Text $size={36} $lh={38} $ls={-1.3} $color="#d94549">+0.49%</Text>
          </IndexLine>
        </IndexBox>
        <Expand viewBox="0 0 28 18" fill="none" stroke="#666" strokeWidth="3" strokeLinecap="round">
          <path d="M2 15.500L14 3l12 12.500" />
        </Expand>
        <Action $bg="#fde1e2" $fg="#e63a40">买</Action>
        <Action $bg="#e6edf9" $fg="#5f88d6">卖</Action>
        <Action $bg="#f1f1f1" $fg={INK}>撤</Action>
        <More width="60" height="20" viewBox="0 0 60 20" fill={INK}>
          <circle cx="7" cy="10" r="6" />
          <circle cx="31" cy="10" r="6" />
          <circle cx="55" cy="10" r="6" />
        </More>
      </ActionBar>
      <NavBar>
        <svg width="38" height="38" viewBox="0 0 38 38" stroke="#9e9e9e" strokeWidth="3">
          <path d="M1 2.500H37M1 19H37M1 35.500H37" />
        </svg>
        <svg width="38" height="38" viewBox="0 0 38 38" fill="none" stroke="#9e9e9e" strokeWidth="3">
          <rect x="2" y="2" width="34" height="34" rx="8" />
        </svg>
        <svg width="38" height="38" viewBox="0 0 38 38" fill="none" stroke="#9e9e9e" strokeWidth="3" strokeLinejoin="round">
          <path d="M3.500 17.500L31 3q3.500-1.500 3.500 2v28q0 3.500-3.500 2L3.500 20.500q-2-1.500 0-3z" />
        </svg>
      </NavBar>
    </>
  );
}

export default function App() {
  return (
    <>
      <GlobalStyle />
      <Page>
        <Status />
        <TopHeader />
        <Quote />
        <CursorInfo />
        <Main>
          <Charts />
          <OrderBook />
        </Main>
        <ToolsSection />
        <Bottom />
      </Page>
    </>
  );
}
